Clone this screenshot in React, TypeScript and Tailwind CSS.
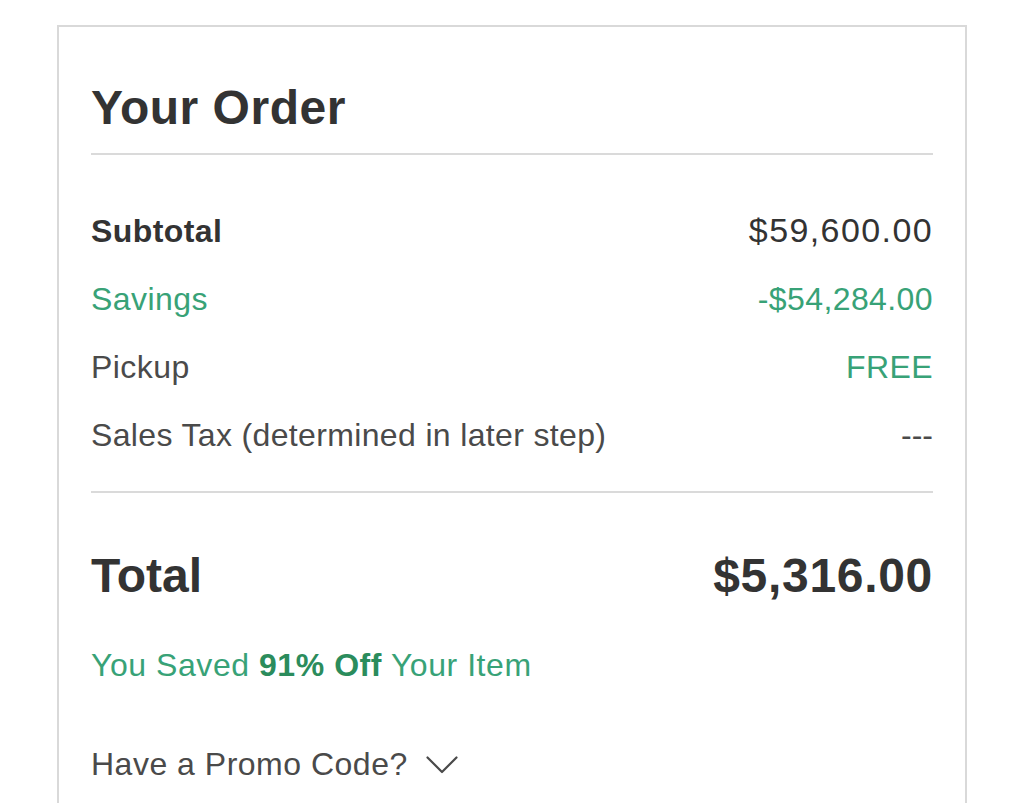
import React from 'react'

const rows = [
  { label: 'Subtotal', value: '$59,600.00', labelClass: 'text-[32px] font-bold tracking-[0.4px] text-[#333333]', valueClass: 'text-[34px] tracking-[1.4px] text-[#333333]' },
  { label: 'Savings', value: '-$54,284.00', labelClass: 'text-[32px] tracking-[0.45px] text-[#38a277]', valueClass: 'text-[32px] tracking-[0.4px] text-[#38a277]' },
  { label: 'Pickup', value: 'FREE', labelClass: 'text-[32px] tracking-[0.45px] text-[#4a4a4a]', valueClass: 'text-[32px] tracking-[0.4px] text-[#38a277]' },
  { label: 'Sales Tax (determined in later step)', value: '---', labelClass: 'text-[32px] tracking-[0.35px] text-[#4a4a4a]', valueClass: 'text-[32px] text-[#4a4a4a]' },
]

export default function App() {
  return (
    <div
      className="h-[803px] overflow-hidden bg-white px-[57px] pt-[25px]"
      style={{ fontFamily: '"Liberation Sans", Arial, sans-serif' }}
    >
      <div className="border-2 border-[#d9d9d9] px-[32px] pt-[57px] pb-[80px]">
        {/* header */}
        <div className="border-b-2 border-[#dadada] pb-[21px]">
          <h1 className="text-[48px] leading-[48px] font-bold tracking-[0.5px] text-[#333333]">Your Order</h1>
        </div>

        {/* line items */}
        <div className="mt-[41px] mb-[22px]">
          {rows.map((row) => (
            <div key={row.label} className="flex items-baseline justify-between leading-[68px]">
              <span className={row.labelClass}>{row.label}</span>
              <span className={row.valueClass}>{row.value}</span>
            </div>
          ))}
        </div>

        <div className="border-t-2 border-[#dadada]" />

        {/* total */}
        <div className="mt-[59px] flex items-baseline justify-between leading-[48px] text-[#333333]">
          <span className="text-[48px] font-bold">Total</span>
          <span className="text-[48px] font-bold tracking-[0.7px]">$5,316.00</span>
        </div>

        <p className="mt-[47px] text-[32px] leading-[36px] tracking-[0.55px] text-[#38a277]">
          You Saved <span className="font-bold text-[#2b8c5c]">91% Off</span> Your Item
        </p>

        <button className="mt-[63px] flex items-center gap-[18px] text-[32px] leading-[36px] tracking-[0.5px] text-[#4a4a4a]">
          <span>Have a Promo Code?</span>
          <svg width="32" height="18" viewBox="0 0 32 18" fill="none" className="mt-[2px]">
            <polyline points="1.5,1.5 16,16 30.5,1.5" stroke="#4a4a4a" strokeWidth="2.2" strokeLinejoin="round" strokeLinecap="round" />
          </svg>
        </button>
      </div>
    </div>
  )
}
